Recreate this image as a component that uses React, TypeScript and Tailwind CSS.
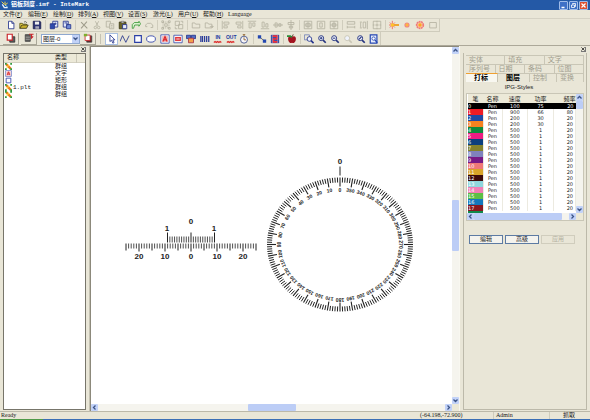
import type { ReactNode } from 'react';
import clsx from 'clsx';

const menus = [
  ['文件', 'F'],
  ['编辑', 'E'],
  ['绘制', 'D'],
  ['排列', 'A'],
  ['视图', 'V'],
  ['设置', 'S'],
  ['激光', 'L'],
  ['用户', 'U'],
  ['帮助', 'H'],
];

const objects = [
  { kind: 'group', name: '', type: '群组' },
  { kind: 'text', name: '', type: '文字' },
  { kind: 'rect', name: '', type: '矩形' },
  { kind: 'group', name: '1.plt', type: '群组' },
  { kind: 'group', name: '', type: '群组' },
];

const pens = [
  { color: '#000000', speed: 100, power: 75, freq: 20 },
  { color: '#ee1c25', speed: 900, power: 66, freq: 80 },
  { color: '#1f4aa5', speed: 200, power: 30, freq: 20 },
  { color: '#f58220', speed: 200, power: 30, freq: 20 },
  { color: '#0f8a3c', speed: 500, power: 1, freq: 20 },
  { color: '#ee1c83', speed: 500, power: 1, freq: 20 },
  { color: '#0b3f7d', speed: 500, power: 1, freq: 20 },
  { color: '#84822b', speed: 500, power: 1, freq: 20 },
  { color: '#7f82bd', speed: 500, power: 1, freq: 20 },
  { color: '#781a85', speed: 500, power: 1, freq: 20 },
  { color: '#f07878', speed: 500, power: 1, freq: 20 },
  { color: '#d9a429', speed: 500, power: 1, freq: 20 },
  { color: '#3d0a0a', speed: 500, power: 1, freq: 20 },
  { color: '#8fd6dd', speed: 500, power: 1, freq: 20 },
  { color: '#f07eb5', speed: 500, power: 1, freq: 20 },
  { color: '#5cbf45', speed: 500, power: 1, freq: 20 },
  { color: '#1478bd', speed: 500, power: 1, freq: 20 },
  { color: '#8a1820', speed: 500, power: 1, freq: 20 },
];

const N = '#23328c'; // navy outline
const G = '#b5b2a1'; // disabled

const zoomGlass = (color: string, extra?: ReactNode) => (
  <g stroke={color} fill="none">
    <circle cx="5" cy="5" r="3" fill="#eef2fb" strokeWidth="1.1" />
    <path d="M7.3 7.3 10.5 10.5" strokeWidth="2" />
    {extra}
  </g>
);

const icons: Record<string, ReactNode> = {
  // file
  new: <path d="M3 1.5h4l2.5 2.5v6.5H3zM7 1.5V4h2.5" fill="#fff" stroke={N} />,
  open: (
    <g>
      <path d="M1 10V4h3l1 1h4v1.5" fill="#e9d24a" stroke="#55501c" />
      <path d="M1 10l2.5-4H11L9 10z" fill="#c9b02a" stroke="#3d3a16" />
      <path d="M6 2.5q2-1.5 3.5.8" fill="none" stroke="#333" strokeWidth=".8" />
    </g>
  ),
  save: (
    <g>
      <path d="M1.5 1.5h8l1 1v8h-9z" fill="#2b3272" stroke="#1c2150" />
      <path d="M3.5 2h5v3.5h-5z" fill="#eee" />
      <path d="M4 7.5h4.5v3H4z" fill="#aab" />
    </g>
  ),
  import: (
    <g>
      <path d="M4.5 1.5h6v7h-6z" fill="#dfe6fa" stroke={N} />
      <path d="M1.5 4.5h5v6h-5z" fill="#2f4cae" stroke={N} />
      <path d="M6 4.5h3M7.5 3v3" stroke={N} />
    </g>
  ),
  export: (
    <g>
      <path d="M1.5 1.5h6v7h-6z" fill="#dfe6fa" stroke={N} />
      <path d="M5.5 5.5h5v5h-5z" fill="#6f8ad6" stroke={N} />
      <path d="M3 3.5h3v3" fill="none" stroke={N} />
    </g>
  ),
  // edit
  delete: <path d="M2.5 2.5 10 10M9.5 2 2.5 10" stroke="#a09d8c" strokeWidth="1.3" />,
  cut: (
    <g fill="none" stroke={G}>
      <path d="M4 1.5 7 7M8 1.5 5 7" />
      <circle cx="4" cy="9" r="1.5" />
      <circle cx="8" cy="9" r="1.5" />
    </g>
  ),
  copy: (
    <g fill="#e6e3d4" stroke={G}>
      <path d="M1.5 1.5h5v7h-5z" />
      <path d="M5.5 4.5h5v6h-5zM7 6.5h2M7 8.5h2" />
    </g>
  ),
  paste: (
    <g>
      <path d="M1.5 2.5h8v8h-8z" fill="#6b6428" stroke="#3c3816" />
      <path d="M4 1.5h3v2H4z" fill="#ddd" stroke="#555" strokeWidth=".6" />
      <path d="M5.5 5.5h5v5h-5z" fill="#e8ecfa" stroke={N} />
    </g>
  ),
  undo: <path d="M1.5 10V5.5L4 3h5.5v-1.500L11.500 4.500 9.500 7.500V6H4.500L3 10z" fill="#d9f0cd" stroke="#3c9a3a" />,
  redo: <path d="M10.500 9V6L8 4H4L2 6v2h2M8 9h2.500" fill="none" stroke={G} />,
  group: (
    <g fill="none" stroke={G}>
      <path d="M2.500 2.500h7v7h-7z" strokeDasharray="1.500 1" />
      <path d="M1 1h2v2H1zM9 1h2v2H9zM1 9h2v2H1zM9 9h2v2H9zM4.500 4.500h3v3h-3z" />
    </g>
  ),
  ungroup: (
    <g fill="none" stroke={G}>
      <path d="M1.500 1.500h5v5h-5zM5.500 5.500h5v5h-5z" />
      <path d="M8 1.500h2.500V4M1.500 8v2.500H4" />
    </g>
  ),
  folder: <path d="M1.500 9.500v-6h3l1 1.500h5v4.500z" fill="none" stroke={G} />,
  folderOut: <path d="M1.500 9.500v-6h3l1 1.500h4v4.500zM7 8h4M9.500 6.500 11 8 9.500 9.500" fill="none" stroke={G} />,
  // align
  left: <path d="M1.500 1v10M3.500 2.500h6v2.500h-6zM3.500 7h4v2.500h-4z" fill="none" stroke={G} />,
  right: <path d="M10.500 1v10M2.500 2.500h6v2.500h-6zM4.500 7h4v2.500h-4z" fill="none" stroke={G} />,
  top: <path d="M1 1.500h10M2.500 3.500H5v6H2.500zM7 3.500h2.500v4H7z" fill="none" stroke={G} />,
  bottom: <path d="M1 10.500h10M2.500 2.500H5v6H2.500zM7 4.500h2.500v4H7z" fill="none" stroke={G} />,
  middle: <path d="M0 6h12M2.500 3.500H5v5H2.500zM7 4.500h2.500v3H7z" fill="none" stroke={G} />,
  center: <path d="M6 0v12M2.500 3h7v2.500h-7zM4 7.500h4v2H4z" fill="none" stroke={G} />,
  boxCenter: <path d="M1.500 1.500h9v9h-9zM3.500 4h5v4h-5zM6 2v8M2 6h8" fill="none" stroke={G} />,
  boxV: <path d="M1.500 1.500h9v9h-9zM4.500 3.500h3v5h-3z" fill="none" stroke={G} />,
  boxH: <path d="M1.500 1.500h9v9h-9zM1.500 6h9M6 1.500v9M4 4h4v4H4z" fill="none" stroke={G} />,
  sameW: <path d="M1.500 2h9v3h-9zM1.500 8.500h9M1.500 7v3M10.500 7v3" fill="none" stroke={G} />,
  sameH: <path d="M5 2.500h3v7H5zM1 2.500h2.500M1 9.500h2.500M2 3v6M10 1v10" fill="none" stroke={G} />,
  sameBoth: <path d="M1.500 1.500h9v9h-9zM4 6h4M6 4v4M1 6h2M9 6h2M6 1v2M6 9v2" fill="none" stroke={G} />,
  // laser
  laser: (
    <g>
      <path d="M4 1v10M0 6h12M1 3l6 6M7 3 1 9" stroke="#f0605a" />
      <path d="M4 6h8" stroke="#f0a51c" strokeWidth="2" />
      <circle cx="4" cy="6" r="2" fill="#ffc42a" />
    </g>
  ),
  spot: <circle cx="6" cy="6" r="2.400" fill="#ffb83a" stroke="#f08a80" strokeWidth="1.400" />,
  burst: (
    <g>
      <circle cx="6" cy="6" r="4" fill="#f8c8a0" stroke="#ee7a7a" strokeWidth="2" strokeDasharray="2.200 .6" />
      <circle cx="6" cy="6" r="2" fill="#ffa51f" />
    </g>
  ),
  frame: <path d="M2 3h8v6.500H2z" fill="none" stroke={G} />,
  // layer buttons
  layer: (
    <g>
      <path d="M4.500 4.500h6v6.500h-6z" fill="#5b5b5b" stroke="#333" />
      <path d="M1.500 1.500h6v7h-6z" fill="#fff" stroke="#c9262c" strokeWidth="1.400" />
    </g>
  ),
  hatch: (
    <g>
      <path d="M1.500 2h6v8h-6z" fill="#5c5c5c" stroke="#444" />
      <path d="M2 5h5M2 7.500h5" stroke="#aaa" />
      <path d="M6 1.500h5.500M9 1.500V6l2-2" fill="none" stroke="#c9262c" strokeWidth="1.400" />
    </g>
  ),
  addLayer: (
    <g>
      <path d="M4.500 3.500h6V11h-6z" fill="#6b2222" stroke="#444" />
      <path d="M2.500 2.500h6v6.500h-6z" fill="#fff" stroke="#c9262c" />
      <path d="M1 1h4v3H1z" fill="#7fae2d" />
    </g>
  ),
  // drawing tools
  pointer: <path d="M3.500 1v8l2-1.500L7 11l1.500-.7L7 7h2.500z" fill="#fff" stroke={N} />,
  zigzag: <path d="M0 9 3 2l4 8 4-8" fill="none" stroke={N} />,
  rect: <path d="M2 2h8v8H2z" fill="#fdfdff" stroke="#2b3fa6" strokeWidth="1.400" />,
  ellipse: <ellipse cx="6" cy="6" rx="5.300" ry="3.800" fill="#fdfdff" stroke="#2b3fa6" />,
  text: (
    <g>
      <path d="M1 1h10v10H1z" fill="#fff" stroke="#3a4eae" />
      <path d="M2.500 2.500h7v7h-7z" fill="#f6b3b0" />
      <path d="M3.500 9 6 3l2.500 6M4.500 7h3" fill="none" stroke="#d8242a" strokeWidth="1.400" />
    </g>
  ),
  image: (
    <g>
      <path d="M1 1.500h10v9H1z" fill="#fff" stroke="#3a4eae" />
      <path d="M2.500 3.500h7v5h-7z" fill="#e1383c" />
      <path d="M4 6h4" stroke="#fff" />
    </g>
  ),
  dynamic: (
    <g>
      <path d="M.5 1.500h5v4h-5zM6.500 1.500h5v4h-5z" fill="#4f6dc4" stroke={N} />
      <path d="M3 5h6v5.500H3z" fill="#f2a04a" stroke="#a8324a" />
    </g>
  ),
  barcode: <path d="M1 2.500v7M3 2.500v7M5.500 2.500v7M8 2.500v7M10.500 2.500v7" stroke="#2a3c9a" strokeWidth="1.500" />,
  io: <path d="M1 10.500l1.500-1 1.500 1 1.500-1 1.500 1 1.500-1 1.500 1" fill="none" stroke="#dd2a2a" strokeWidth="1.500" />,
  timer: (
    <g>
      <circle cx="6" cy="6.800" r="4.200" fill="#f6f6fa" stroke="#3a4a86" />
      <path d="M6 2.500V.8M4.500 .8h3M6 4v3h2.500" fill="none" stroke="#8a5a20" />
    </g>
  ),
  nodes: (
    <g>
      <path d="M3 3.500l6 5" stroke="#555" />
      <path d="M1 1.500h4v4H1zM7 6.500h4v4H7z" fill="#2347b0" />
    </g>
  ),
  pattern: (
    <g>
      <path d="M1 1h10v10H1z" fill="#3c50a8" />
      <path d="M3 2.500h5.500V6H4v3.500h5" fill="none" stroke="#f0323a" strokeWidth="2" />
      <path d="M3 1v10M9 1v10" stroke="#a9b5dd" strokeWidth=".5" />
    </g>
  ),
  apple: (
    <g>
      <path d="M6 3.500C2.500 1.500.5 4 1.500 7.500 2.500 10.500 4 11.500 6 10.500c2 1 3.500 0 4.500-3C11.500 4 9.500 1.500 6 3.500z" fill="#a3141f" />
      <path d="M0 2.500h4l2 1.500" stroke="#2f8c3a" strokeWidth="2" fill="none" />
      <path d="M6 3.500 7.500.5" stroke="#4a2a1a" />
    </g>
  ),
  // zoom
  zoomRect: (
    <g>
      <path d="M.5 1h6v6h-6z" fill="none" stroke="#7080b8" />
      <circle cx="6.500" cy="6" r="2.800" fill="#eef2fb" stroke={N} />
      <path d="M8.500 8 11.500 11" stroke={N} strokeWidth="2" />
    </g>
  ),
  zoomIn: zoomGlass('#26357f', <path d="M3.500 5h3M5 3.500v3" strokeWidth="1.200" />),
  zoomOut: zoomGlass('#26357f', <path d="M3.500 5h3" strokeWidth="1.200" />),
  zoomOff: zoomGlass('#c9c6b5'),
  zoomAll: zoomGlass('#26357f', <path d="M3.500 6.500l3-3" strokeWidth="1.500" />),
  zoomPage: (
    <g>
      <path d="M1.500 1h8v10h-8z" fill="#e6edfc" stroke="#2547b2" strokeWidth="1.400" />
      <circle cx="5.500" cy="5.500" r="2" fill="#fff" stroke="#2547b2" />
      <path d="M7 7l3 3.500" stroke="#2547b2" strokeWidth="1.500" />
    </g>
  ),
  groupItem: (
    <g>
      <path d="M2 2l8 8" stroke="#f07a1c" strokeWidth="4" />
      <path d="M3 8l4-5" stroke="#f7d13a" strokeWidth="2" />
      <path d="M0 0h3v3H0zM9 0h3v3H9zM0 9h3v3H0zM9 9h3v3H9z" fill="#2f9a3c" />
    </g>
  ),
  logo: (
    <g>
      <path d="M1 1l4 4M6 1v5M10 3 6 6" stroke="#f3d24a" strokeWidth="1.500" />
      <path d="M2 5l3 5h5" stroke="#eef4ff" strokeWidth="2" fill="none" />
      <path d="M6 6l4 3" stroke="#8fd6f2" strokeWidth="1.500" />
    </g>
  ),
};

const Icon = ({ name, className = 'size-[10px]' }: { name: string; className?: string }) => (
  <svg viewBox="0 0 12 12" className={clsx('shrink-0', className)} aria-hidden="true">
    {icons[name]}
  </svg>
);

const Tool = ({ name, active }: { name: string; active?: boolean }) => (
  <button
    aria-label={name}
    className={clsx(
      'flex h-3 w-[13px] shrink-0 items-center justify-center',
      active && 'border border-[#a9bfe0] bg-white',
    )}
  >
    <Icon name={name} />
  </button>
);

// IN / OUT port tools carry their caption above a red wave
const PortTool = ({ label }: { label: string }) => (
  <button className="flex h-3 w-[13px] shrink-0 flex-col items-center justify-center text-[5px] leading-[6px] font-bold text-[#1d3aa0]">
    {label}
    <svg viewBox="0 8 12 4" className="h-[4px] w-[10px]" aria-hidden="true">
      {icons.io}
    </svg>
  </button>
);

const Separator = () => (
  <div className="flex w-1 shrink-0 justify-center">
    <div className="h-[10px] w-px bg-[#d0cdbd]" />
  </div>
);

const toolGroups = [
  ['new', 'open', 'save'],
  ['import', 'export'],
  ['delete', 'cut', 'copy', 'paste', 'undo', 'redo'],
  ['group', 'ungroup'],
  ['folder', 'folderOut'],
  ['left', 'right', 'top', 'bottom', 'middle', 'center'],
  ['boxCenter', 'boxV', 'boxH'],
  ['sameW', 'sameH', 'sameBoth'],
  ['laser', 'spot', 'burst', 'frame'],
];

const arrows: Record<string, string> = {
  up: 'M1.500 4.500l2-2 2 2',
  down: 'M1.500 2.500l2 2 2-2',
  left: 'M4.500 1.500l-2 2 2 2',
  right: 'M2.500 1.500l2 2-2 2',
};

const ArrowButton = ({ dir }: { dir: string }) => (
  <button aria-label={dir} className="size-[7px] shrink-0 rounded-[1px] bg-[#c2d2f8]">
    <svg viewBox="0 0 7 7" className="size-[7px]" aria-hidden="true">
      <path d={arrows[dir]} fill="none" stroke="#3c5486" strokeWidth="1.300" />
    </svg>
  </button>
);

const Caption = ({ label, danger, children }: { label: string; danger?: boolean; children: ReactNode }) => (
  <button
    aria-label={label}
    className={clsx(
      'flex size-[9px] items-center justify-center rounded-[1px] border border-[#9fbbe8]',
      danger ? 'bg-[#dc5030]' : 'bg-[#3f70c6]',
    )}
  >
    <svg viewBox="0 0 7 7" className="size-[7px]" fill="none" stroke="#fff" aria-hidden="true">
      {children}
    </svg>
  </button>
);

const TitleBar = () => (
  <header className="flex h-[10px] shrink-0 items-center gap-[2px] bg-[#2459a6] pr-[2px] pl-[1px] text-[6px] leading-[10px] text-white">
    <Icon name="logo" className="size-[8px]" />
    <h1 className="flex-1 font-bold whitespace-pre [font-family:'Liberation_Mono','Noto_Sans_CJK_SC',monospace]">
      铝板刻度.imf - InteMark
    </h1>
    <div className="flex gap-[1px]">
      <Caption label="minimize">
        <path d="M1.500 5.500h3" strokeWidth="1.500" />
      </Caption>
      <Caption label="restore">
        <path d="M2.500 2.500v-1h3v3h-1M1.500 3h3v2.500h-3z" strokeWidth=".8" />
      </Caption>
      <Caption label="close" danger>
        <path d="M1.500 1.500l4 4M5.500 1.500l-4 4" strokeWidth="1.200" />
      </Caption>
    </div>
  </header>
);

const MenuBar = () => (
  <nav className="flex h-[9px] shrink-0 items-center border-b border-[#d5d2c4] pl-[3px] text-[6px] leading-[8px] [font-family:'Liberation_Serif','Noto_Sans_CJK_SC',serif]">
    {menus.map(([label, key]) => (
      <button key={key} className="w-[25px] shrink-0 text-left whitespace-nowrap">
        {label}(<u>{key}</u>)
      </button>
    ))}
    <button>Language</button>
  </nav>
);

const ToolBars = () => (
  <div className="shrink-0 border-b border-[#aca899]">
    <div className="flex h-[13px] w-fit items-center border-r border-b border-[#cfccbc] pl-1">
      {toolGroups.map((group, index) => (
        <div key={index} className="flex items-center">
          {index > 0 && <Separator />}
          {group.map((name) => (
            <Tool key={name} name={name} />
          ))}
        </div>
      ))}
    </div>
    <div className="flex h-[13px] w-fit items-center border-r border-[#cfccbc] pl-[3px]">
      <button aria-label="layer" className="flex h-3 w-4 items-center justify-center border-r border-b border-[#a9a697]">
        <Icon name="layer" />
      </button>
      <button aria-label="hatch" className="ml-[2px] flex h-3 w-4 items-center justify-center border-r border-b border-[#a9a697]">
        <Icon name="hatch" />
      </button>
      <div className="relative ml-1 flex h-[10px] w-[39px] items-center border border-[#8fa8cf] bg-white">
        <select
          aria-label="图层"
          className="w-full appearance-none pl-[1px] text-[6px] leading-[8px] outline-none"
        >
          <option>图层-0</option>
        </select>
        <span className="pointer-events-none absolute top-0 right-0 flex h-[8px] w-[7px] items-center bg-[#c2d2f8]">
          <svg viewBox="0 0 7 7" className="size-[7px]" aria-hidden="true">
            <path d={arrows.down} fill="none" stroke="#3c5486" strokeWidth="1.300" />
          </svg>
        </span>
      </div>
      <button aria-label="add layer" className="flex h-3 w-4 items-center justify-center border-r border-b border-[#a9a697]">
        <Icon name="addLayer" />
      </button>
      <div className="mx-1 h-[10px] w-px bg-[#c5c2b2]" />
      <div className="flex w-[146px] justify-between">
        <Tool name="pointer" active />
        {['zigzag', 'rect', 'ellipse', 'text', 'image', 'dynamic', 'barcode'].map((name) => (
          <Tool key={name} name={name} />
        ))}
        <PortTool label="IN" />
        <PortTool label="OUT" />
        <Tool name="timer" />
      </div>
      <Separator />
      <Tool name="nodes" />
      <Tool name="pattern" />
      <Separator />
      <Tool name="apple" />
      <Separator />
      {['zoomRect', 'zoomIn', 'zoomOut', 'zoomOff', 'zoomAll', 'zoomPage'].map((name) => (
        <Tool key={name} name={name} />
      ))}
    </div>
  </div>
);

const CloseMark = () => (
  <button aria-label="close panel" className="size-[5px] border-r border-b border-[#777]">
    <svg viewBox="0 0 5 5" className="size-[4px]" aria-hidden="true">
      <path d="M.5 .5l4 4M4.500 .5l-4 4" stroke="#222" />
    </svg>
  </button>
);

const itemIcons: Record<string, string> = { group: 'groupItem', text: 'text', rect: 'rect' };

const ObjectPanel = () => (
  <aside className="flex w-[90px] shrink-0 flex-col border-r border-[#c5c2b2] px-[3px]">
    <div className="flex h-[7px] shrink-0 items-center justify-end">
      <CloseMark />
    </div>
    <div className="flex-1 border border-[#77756a] bg-white">
      <table className="w-full table-fixed text-left text-[6px] leading-[7px]">
        <thead>
          <tr className="h-[8px] border-b border-[#d3d0c0] bg-[#ece9d8]">
            <th className="w-[51px] pl-[3px] font-normal">名称</th>
            <th className="border-r border-[#cbc8b8] font-normal">类型</th>
            <th className="w-[9px]"></th>
          </tr>
        </thead>
        <tbody>
          {objects.map((item, index) => (
            <tr key={index} className="h-[7px]">
              <td className="pl-[1px]">
                <div className="flex h-[7px] items-center gap-[1px] [font-family:'Liberation_Mono',monospace]">
                  <Icon name={itemIcons[item.kind]} className="size-[7px]" />
                  {item.name}
                </div>
              </td>
              <td colSpan={2}>{item.type}</td>
            </tr>
          ))}
        </tbody>
      </table>
    </div>
    <div className="h-[1px] shrink-0" />
  </aside>
);

// dial geometry, degrees run counter-clockwise from the top
const polar = (deg: number, rx: number, ry: number) => {
  const a = (deg * Math.PI) / 180;
  return { x: 340 - rx * Math.sin(a), y: 244 - ry * Math.cos(a) };
};

const Dial = () => (
  <g>
    {Array.from({ length: 180 }, (_, i) => {
      const deg = i * 2;
      const len = deg % 10 === 0 ? 9 : 5;
      const from = polar(deg, 73, 67);
      const to = polar(deg, 73 - len, 67 - len);
      return (
        <line key={i} x1={from.x} y1={from.y} x2={to.x} y2={to.y} strokeWidth={deg % 10 === 0 ? 1.1 : 1} />
      );
    })}
    {Array.from({ length: 36 }, (_, i) => {
      const p = polar(i * 10, 61, 55);
      return (
        <text
          key={i}
          x={p.x}
          y={p.y}
          transform={`rotate(${-i * 10} ${p.x} ${p.y})`}
          dominantBaseline="central"
          className="text-[5px]"
        >
          {i * 10}
        </text>
      );
    })}
    <path d="M340 166v9" strokeWidth="1" />
    <text x="340" y="163">0</text>
  </g>
);

const Ruler = () => (
  <g>
    {Array.from({ length: 51 }, (_, i) => {
      const n = i - 25;
      const x = 191 + n * 2.6;
      const end = n % 10 === 0 ? 251 : n % 5 === 0 ? 250 : 248;
      return <line key={i} x1={x} x2={x} y1={243} y2={end} strokeWidth={n % 5 === 0 ? 1 : 0.8} />;
    })}
    {[-20, -10, 0, 10, 20].map((n) => (
      <text key={n} x={191 + n * 2.6} y={258}>
        {Math.abs(n)}
      </text>
    ))}
    {Array.from({ length: 21 }, (_, i) => {
      const x = 167.5 + i * 2.35;
      return <line key={i} x1={x} x2={x} y1={i % 10 === 0 ? 232 : 236} y2={242} strokeWidth={i % 10 === 0 ? 1 : 0.8} />;
    })}
    <text x="167" y="230">1</text>
    <text x="191" y="223">0</text>
    <text x="214" y="230">1</text>
  </g>
);

const Canvas = () => (
  <main className="flex min-w-0 flex-1 flex-col border-t border-l border-[#8c897b]">
    <div className="flex min-h-0 flex-1">
      <div className="min-w-0 flex-1 bg-white">
        <svg
          viewBox="91 47 361 356"
          className="h-full w-full [font-family:'Liberation_Sans',sans-serif] text-[8px] font-bold"
          stroke="#222"
          textAnchor="middle"
        >
          <g className="[&_text]:fill-[#222] [&_text]:stroke-none">
            <Ruler />
            <Dial />
          </g>
        </svg>
      </div>
      <div className="flex w-[7px] shrink-0 flex-col items-center justify-between bg-[#f5f4ee]">
        <ArrowButton dir="up" />
        <div className="h-[51px] w-[7px] rounded-[1px] bg-[#bccdf6]" />
        <ArrowButton dir="down" />
      </div>
    </div>
    <div className="flex h-[7px] shrink-0 bg-[#ece9d8] pr-[7px]">
      <div className="flex flex-1 justify-between bg-[#f5f4ee]">
        <ArrowButton dir="left" />
        <div className="h-[7px] w-[48px] rounded-[1px] bg-[#bccdf6]" />
        <ArrowButton dir="right" />
      </div>
    </div>
  </main>
);

const Tab = ({ label, active, bold }: { label: string; active?: boolean; bold?: boolean }) => (
  <button
    className={clsx(
      'h-[9px] flex-1 border-t border-r text-left',
      active ? 'border-t-[#f0a030] border-r-[#c5c2b2] bg-[#f8f7f0]' : 'border-[#c9c6b6]',
      active || bold ? 'pl-[8px] font-bold text-black' : 'pl-[3px] text-[#a09d8e]',
    )}
  >
    {label}
  </button>
);

const PenTable = () => (
  <div className="border border-[#c9c6b6] bg-[#ece9d8]">
    <div className="flex">
      <div className="min-w-0 flex-1 bg-white pl-[1px]">
        <table className="w-full table-fixed text-center text-[5px] leading-[6px] [font-family:'DejaVu_Sans','Noto_Sans_CJK_SC',sans-serif]">
          <thead>
            <tr className="h-[9px] bg-[#ece9d8] text-[6px] [&>th]:font-normal">
              <th className="w-[15px]">笔</th>
              <th className="w-[19px]">名称</th>
              <th>速度</th>
              <th>功率</th>
              <th className="w-[22px] text-right">频率</th>
            </tr>
          </thead>
          <tbody>
            {pens.map((pen, index) => (
              <tr
                key={index}
                className={clsx(
                  'h-[6px] [&>td]:p-0',
                  index === 0 ? 'bg-black text-white' : 'text-[#222] [&>td]:border-r [&>td]:border-[#eceae0]',
                )}
              >
                <td className="text-left text-white" style={{ backgroundColor: pen.color }}>
                  {index}
                </td>
                <td>Pen</td>
                <td>{pen.speed}</td>
                <td>{pen.power}</td>
                <td className="text-right">
                  <span className="pr-[2px]">{pen.freq}</span>
                </td>
              </tr>
            ))}
          </tbody>
        </table>
        <div className="h-[2px] w-[15px] bg-[#10894a]" />
      </div>
      <div className="flex w-[7px] flex-col bg-[#f5f4ee]">
        <ArrowButton dir="up" />
        <div className="h-[8px] rounded-[1px] bg-[#bccdf6]" />
        <div className="flex-1" />
        <ArrowButton dir="down" />
      </div>
    </div>
    <div className="mr-[7px] flex bg-[#f5f4ee]">
      <ArrowButton dir="left" />
      <div className="h-[7px] w-[88px] rounded-[1px] bg-[#bccdf6]" />
      <div className="flex-1" />
      <ArrowButton dir="right" />
    </div>
  </div>
);

const PenPanel = () => (
  <aside className="flex w-[131px] shrink-0 flex-col border-l border-[#f8f7f0] pr-[3px] pl-[3px]">
    <div className="flex h-[7px] shrink-0 items-center justify-end pr-[1px]">
      <CloseMark />
    </div>
    <div className="flex flex-1 flex-col border-x border-b border-[#bcb9a9] px-[2px] pt-[2px]">
      <div className="text-[7px] leading-[8px] [font-family:'Liberation_Serif','Noto_Sans_CJK_SC',serif]">
        <div className="flex">
          <Tab label="实体" />
          <Tab label="填充" />
          <Tab label="文字" />
        </div>
        <div className="flex">
          <Tab label="序列号" />
          <Tab label="日期" />
          <Tab label="条码" />
          <Tab label="位图" />
        </div>
        <div className="flex">
          <Tab label="打标" active />
          <Tab label="图层" bold />
          <Tab label="控制" />
          <Tab label="变换" />
        </div>
      </div>
      <h2 className="h-[11px] pr-[12px] text-center text-[6px] leading-[11px]">IPG-Styles</h2>
      <PenTable />
      <div className="mt-[14px] flex gap-[2px] pl-[3px] text-[6px] leading-[7px]">
        <button className="h-[9px] w-[34px] border border-[#5d7ba3] bg-[#f4f3ee]">编辑</button>
        <button className="h-[9px] w-[34px] border border-[#5d7ba3] bg-[#f4f3ee]">高级</button>
        <button disabled className="h-[9px] w-[34px] border border-[#d0cdbd] text-[#b3b0a0]">
          应用
        </button>
      </div>
    </div>
    <div className="h-[1px] shrink-0" />
  </aside>
);

const StatusBar = () => (
  <footer className="shrink-0">
    <div className="flex h-[8px] items-center border-t border-[#bcb9a9] text-[6px] leading-[7px] [font-family:'Liberation_Serif','Noto_Sans_CJK_SC',serif]">
      <span className="flex-1 pl-[1px]">Ready</span>
      <span className="w-[74px] border-r border-[#cfccbc]">(-64.198,-72.900)</span>
      <span className="w-[56px] border-r border-[#cfccbc] pl-[2px]">Admin</span>
      <span className="w-[40px] pl-[13px]">抓取</span>
    </div>
    <div className="flex h-[1px]">
      <div className="w-[43px] bg-[#4f9a48]" />
      <div className="flex-1 bg-[#3b6fb5]" />
    </div>
  </footer>
);

const App = () => {
  return (
    <div className="flex h-screen flex-col overflow-hidden bg-[#e9e6d7] text-[#1a1a1a] [font-family:'Liberation_Sans','Noto_Sans_CJK_SC',sans-serif]">
      <TitleBar />
      <MenuBar />
      <ToolBars />
      <div className="flex min-h-0 flex-1">
        <ObjectPanel />
        <Canvas />
        <PenPanel />
      </div>
      <StatusBar />
    </div>
  );
};
export default App;
